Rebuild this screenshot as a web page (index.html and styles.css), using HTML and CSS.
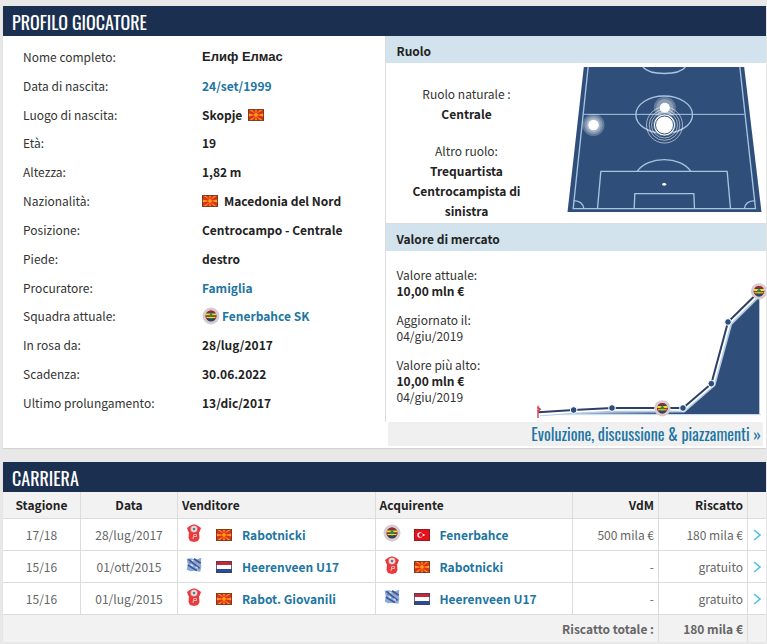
FILE: index.html
```html
<!DOCTYPE html>
<html lang="it">
<head>
  <meta charset="UTF-8">
  <meta name="viewport" content="width=device-width, initial-scale=1">
  <title>Profilo giocatore</title>
  <link rel="stylesheet" href="styles.css">
</head>
<body>

  <!-- Flags and crests -->
  <svg class="sprite" aria-hidden="true">
    <symbol id="flag-mk" viewBox="0 0 16 12">
      <rect width="16" height="12" fill="#e0301a"/>
      <path d="M0 0h3l5 5zM16 0h-3L8 5zM0 12h3l5-5zM16 12h-3L8 7zM7 0h2l-1 5zM7 12h2L8 7zM0 4.500v3L8 6zM16 4.500v3L8 6z" fill="#fba01c"/>
      <circle cx="8" cy="6" r="2.200" fill="#fba01c" stroke="#e0301a" stroke-width=".6"/>
      <rect x=".5" y=".5" width="15" height="11" fill="none" stroke="#5c3a2a" stroke-opacity=".8"/>
    </symbol>
    <symbol id="flag-tr" viewBox="0 0 16 12">
      <rect width="16" height="12" fill="#e8101c"/>
      <circle cx="6" cy="6" r="2.700" fill="#fff"/>
      <circle cx="6.800" cy="6" r="2.100" fill="#e8101c"/>
      <circle cx="9.700" cy="6" r="1" fill="#fff"/>
      <rect x=".5" y=".5" width="15" height="11" fill="none" stroke="#7a2020" stroke-opacity=".8"/>
    </symbol>
    <symbol id="flag-nl" viewBox="0 0 16 12">
      <rect width="16" height="12" fill="#fff"/>
      <rect width="16" height="4" fill="#c4283a"/>
      <rect y="8" width="16" height="4" fill="#2a4c96"/>
      <rect x=".5" y=".5" width="15" height="11" fill="none" stroke="#44405a" stroke-opacity=".8"/>
    </symbol>
    <symbol id="crest-fener" viewBox="0 0 18 18">
      <circle cx="9" cy="9" r="8.500" fill="#dccfd3"/>
      <circle cx="9" cy="9" r="7" fill="none" stroke="#c9bcc4" stroke-width=".8" stroke-dasharray="1 1"/>
      <circle cx="9" cy="9" r="5.500" fill="#34405f"/>
      <path d="M4.500 5.800h9a5.500 5.500 0 0 0-9 0z" fill="#a32630"/>
      <path d="M3.800 6.600h10.400v2H3.600z" fill="#f3dc2b"/>
      <path d="M3.600 8.600h10.800l-.4 2.800H4z" fill="#9a3a2c"/>
      <path d="M9 5.800l2 2.700-1 3.500H8L7 8.500z" fill="#2f8a3c"/>
      <path d="M4.500 10.500h9" stroke="#f3dc2b"/>
    </symbol>
    <symbol id="crest-rabot" viewBox="0 0 16 18">
      <path d="M1 4l3.500-2.500L8 .3l3.500 1.200L15 4l-1.500 4H13l.5 6-1.500 3-4 1-4-1-1.500-3L3 8h-.5z" fill="#ea3a3e"/>
      <circle cx="8" cy="5" r="3.300" fill="#efe6ea" stroke="#c88" stroke-width=".5"/>
      <path d="M8 3.500l1.500 1.100-.6 1.700H7.100l-.6-1.700z" fill="#6d7280"/>
      <path d="M7 15l.8-4.500h2.700v2H8" fill="none" stroke="#f9b8b4"/>
    </symbol>
    <symbol id="crest-heer" viewBox="0 0 16 16">
      <path d="M1.500 2.500L5 2l5 1 4.500-1.500-.5 5 .5 3.500-1 4-5-1-4 .5-3-1.500L2.500 8z" fill="#8aaad8"/>
      <path d="M3 3l10 8M2.500 8l8 5M8 2.500l6 4" stroke="#35589c" stroke-width="1.500"/>
      <path d="M6 3.500l1.500 1M5 7.500l2 1.400M9.500 9.500l2 1.500" stroke="#dfe8f6"/>
      <path d="M10 4.500l1 .8M4 5.500l1 .8M11 9l1 .8" stroke="#c8405c"/>
    </symbol>
  </svg>

  <section class="box">
    <h2 class="box-title">Profilo giocatore</h2>
    <div class="profile">

      <dl class="facts">
        <div><dt>Nome completo:</dt><dd class="cyrillic">Елиф Елмас</dd></div>
        <div><dt>Data di nascita:</dt><dd><a href="#">24/set/1999</a></dd></div>
        <div><dt>Luogo di nascita:</dt><dd class="country">Skopje <svg class="flag"><use href="#flag-mk"/></svg></dd></div>
        <div><dt>Età:</dt><dd>19</dd></div>
        <div><dt>Altezza:</dt><dd>1,82 m</dd></div>
        <div><dt>Nazionalità:</dt><dd class="country"><svg class="flag"><use href="#flag-mk"/></svg> Macedonia del Nord</dd></div>
        <div><dt>Posizione:</dt><dd>Centrocampo - Centrale</dd></div>
        <div><dt>Piede:</dt><dd>destro</dd></div>
        <div><dt>Procuratore:</dt><dd><a href="#">Famiglia</a></dd></div>
        <div><dt>Squadra attuale:</dt><dd class="team"><svg class="crest"><use href="#crest-fener"/></svg><a href="#">Fenerbahce SK</a></dd></div>
        <div><dt>In rosa da:</dt><dd>28/lug/2017</dd></div>
        <div><dt>Scadenza:</dt><dd>30.06.2022</dd></div>
        <div><dt>Ultimo prolungamento:</dt><dd>13/dic/2017</dd></div>
      </dl>

      <div class="side">
        <div class="side-main">
          <h3 class="side-title">Ruolo</h3>
          <div class="role">
            <div class="role-text">
              <p>Ruolo naturale :<br><strong>Centrale</strong></p>
              <p>Altro ruolo:<br><strong>Trequartista</strong><br><strong>Centrocampista di sinistra</strong></p>
            </div>
            <svg class="pitch" viewBox="18 33 590 441" role="img" aria-label="Posizioni in campo">
              <path d="M71 36H552L604 471H22z" fill="#2f4f7a"/>
              <g fill="none" stroke="#a9c4e2" stroke-width="4">
                <path d="M84 36L39 461H586L539 36"/>
                <path d="M70 178H553" stroke-width="3"/>
                <path d="M248 36C270 62 355 62 376 36"/>
                <ellipse cx="312" cy="179" rx="85" ry="56"/>
                <path d="M112 461L122 349H501L511 461M222 461L224 416H401L403 461"/>
                <path d="M231 349C262 302 362 302 392 349"/>
                <path d="M40 437Q68 438 71 461M585 437Q555 438 553 461"/>
              </g>
              <ellipse cx="312" cy="388" rx="6" ry="4" fill="#fff"/>
              <g fill="#fff">
                <g fill-opacity=".25">
                  <circle cx="100" cy="210" r="33"/><circle cx="100" cy="210" r="27"/><circle cx="100" cy="210" r="21"/>
                  <circle cx="314" cy="158" r="33"/><circle cx="314" cy="158" r="26"/>
                </g>
                <g fill="none" stroke="#fff" stroke-opacity=".55" stroke-width="3">
                  <circle cx="313" cy="210" r="54"/><circle cx="313" cy="210" r="46"/><circle cx="313" cy="210" r="39"/>
                </g>
                <circle cx="313" cy="210" r="33" stroke="#2f4f7a" stroke-width="2"/>
                <circle cx="313" cy="210" r="27" stroke="#2f4f7a" stroke-width="3"/>
                <circle cx="100" cy="210" r="16"/>
                <circle cx="314" cy="158" r="15"/>
              </g>
            </svg>
          </div>

          <h3 class="side-title">Valore di mercato</h3>
          <div class="market">
            <div class="market-text">
              <p>Valore attuale:<br><strong>10,00 mln €</strong></p>
              <p>Aggiornato il:<br>04/giu/2019</p>
              <p>Valore più alto:<br><strong>10,00 mln €</strong><br>04/giu/2019</p>
            </div>
            <svg class="chart" viewBox="15 36 693 408" role="img" aria-label="Andamento del valore di mercato">
              <defs>
                <linearGradient id="fade" gradientUnits="userSpaceOnUse" x1="25" y1="0" x2="440" y2="0">
                  <stop offset="0" stop-color="#dce9f5"/>
                  <stop offset="1" stop-color="#2f4f7a"/>
                </linearGradient>
              </defs>
              <path d="M25 433V428L131 420 246 414H459L544 341 594 156 688 64V433z" fill="url(#fade)"/>
              <path d="M28 434H693" stroke="#c7dcf0" stroke-width="3"/>
              <path d="M30 434L131 427 246 423H462L552 345 602 162 688 76" fill="none" stroke="#b4cbe6" stroke-width="9"/>
              <path d="M25 428L131 420 246 414H459L544 341 594 156 688 64" fill="none" stroke="#fff" stroke-width="17"/>
              <path d="M25 427L131 420 246 414H459L544 341 594 156 688 64" fill="none" stroke="#2c4068" stroke-width="6"/>
              <g fill="#2c4e7c" stroke="#fff" stroke-width="3">
                <circle cx="131" cy="420" r="10"/>
                <circle cx="246" cy="414" r="10"/>
                <circle cx="459" cy="414" r="10"/>
                <circle cx="544" cy="341" r="10"/>
                <circle cx="594" cy="156" r="10"/>
              </g>
              <path d="M24 407V450M24 412L31 418 24 424" fill="none" stroke="#d9364a" stroke-width="4"/>
              <use href="#crest-fener" x="371" y="389" width="52" height="52"/>
              <use href="#crest-fener" x="661" y="38" width="52" height="52"/>
            </svg>
          </div>
        </div>
        <a class="more" href="#">Evoluzione, discussione &amp; piazzamenti »</a>
      </div>
    </div>
  </section>

  <section class="box">
    <h2 class="box-title">Carriera</h2>
    <table class="career">
      <colgroup>
        <col class="c-season"><col class="c-date"><col><col><col class="c-value"><col class="c-fee"><col class="c-more">
      </colgroup>
      <thead>
        <tr>
          <th class="center">Stagione</th>
          <th class="center">Data</th>
          <th>Venditore</th>
          <th>Acquirente</th>
          <th class="right">VdM</th>
          <th class="right">Riscatto</th>
          <th></th>
        </tr>
      </thead>
      <tbody>
        <tr>
          <td class="center">17/18</td>
          <td class="center">28/lug/2017</td>
          <td><div class="club"><svg class="crest"><use href="#crest-rabot"/></svg><svg class="flag"><use href="#flag-mk"/></svg><a href="#">Rabotnicki</a></div></td>
          <td><div class="club"><svg class="crest"><use href="#crest-fener"/></svg><svg class="flag"><use href="#flag-tr"/></svg><a href="#">Fenerbahce</a></div></td>
          <td class="right">500 mila €</td>
          <td class="right">180 mila €</td>
          <td class="go"><a href="#" aria-label="Dettagli"><svg viewBox="0 0 8 12"><path d="M1 1l6 5-6 5"/></svg></a></td>
        </tr>
        <tr>
          <td class="center">15/16</td>
          <td class="center">01/ott/2015</td>
          <td><div class="club"><svg class="crest"><use href="#crest-heer"/></svg><svg class="flag"><use href="#flag-nl"/></svg><a href="#">Heerenveen U17</a></div></td>
          <td><div class="club"><svg class="crest"><use href="#crest-rabot"/></svg><svg class="flag"><use href="#flag-mk"/></svg><a href="#">Rabotnicki</a></div></td>
          <td class="right">-</td>
          <td class="right">gratuito</td>
          <td class="go"><a href="#" aria-label="Dettagli"><svg viewBox="0 0 8 12"><path d="M1 1l6 5-6 5"/></svg></a></td>
        </tr>
        <tr>
          <td class="center">15/16</td>
          <td class="center">01/lug/2015</td>
          <td><div class="club"><svg class="crest"><use href="#crest-rabot"/></svg><svg class="flag"><use href="#flag-mk"/></svg><a href="#">Rabot. Giovanili</a></div></td>
          <td><div class="club"><svg class="crest"><use href="#crest-heer"/></svg><svg class="flag"><use href="#flag-nl"/></svg><a href="#">Heerenveen U17</a></div></td>
          <td class="right">-</td>
          <td class="right">gratuito</td>
          <td class="go"><a href="#" aria-label="Dettagli"><svg viewBox="0 0 8 12"><path d="M1 1l6 5-6 5"/></svg></a></td>
        </tr>
      </tbody>
      <tfoot>
        <tr>
          <td class="right" colspan="5">Riscatto totale :</td>
          <td class="right">180 mila €</td>
          <td></td>
        </tr>
      </tfoot>
    </table>
  </section>

</body>
</html>
```

FILE: styles.css
```css
* {
  box-sizing: border-box;
}

body {
  margin: 0;
  padding: 6px 1px 0 3px;
  background: #e8e8e8;
  color: #333;
  font-family: "Source Sans Pro", "Noto Sans CJK SC", sans-serif;
  font-size: 12px;
  line-height: 20px;
}

h2, h3, p, dl, dd {
  margin: 0;
}

a {
  color: #1d75a3;
  text-decoration: none;
}

a:hover {
  text-decoration: underline;
}

.sprite {
  position: absolute;
  width: 0;
  height: 0;
}

.flag {
  width: 16px;
  height: 12px;
}

.crest {
  width: 18px;
  height: 18px;
}

.box {
  background: #fff;
  box-shadow: 0 1px 1px #d4d4d4;
}

.box + .box {
  margin-top: 14px;
}

.box-title {
  padding: 2px 9px 0;
  background: #1b3051;
  color: #fff;
  font-family: Oswald, "Roboto Condensed", "Liberation Sans Narrow", sans-serif;
  font-size: 18px;
  font-weight: 400;
  line-height: 28px;
  text-transform: uppercase;
}

/* Player profile */
.profile {
  display: grid;
  grid-template-columns: 1fr 1fr;
}

.facts {
  display: flex;
  flex-direction: column;
  justify-content: space-between;
  padding: 11px 0 35px 20px;
}

.facts div {
  display: flex;
}

.facts dt {
  width: 50%;
  max-width: 179px;
}

.facts dd {
  color: #222;
  font-weight: 700;
}

.facts .cyrillic {
  font-family: "Liberation Sans", Arial, sans-serif;
  font-size: 13px;
}

.country {
  display: flex;
  align-items: center;
  gap: 6px;
}

.team {
  display: flex;
  align-items: center;
  gap: 2px;
}

.side {
  padding-bottom: 2px;
}

.side-main {
  border-left: 1px solid #dcdcdc;
}

.side-title {
  padding: 2px 11px 0;
  background: #d3e3ee;
  color: #222;
  font-size: 12px;
  line-height: 25px;
}

.role {
  display: flex;
  justify-content: space-between;
  padding: 3px 3px 2px 0;
  border-bottom: 1px solid #dcdcdc;
}

.role-text {
  width: 162px;
  padding: 18px 20px 0;
  text-align: center;
}

.role-text p + p {
  margin-top: 17px;
}

.role-text strong,
.market-text strong {
  color: #222;
}

.pitch {
  width: 197px;
  height: 147px;
}

.market {
  display: flex;
  justify-content: space-between;
  align-items: flex-end;
  padding-bottom: 4px;
}

.market-text {
  padding: 16px 0 13px 11px;
  line-height: 16px;
}

.market-text p + p {
  margin-top: 13px;
}

.chart {
  width: 231px;
  height: 136px;
}

.more {
  display: block;
  margin: 0 3px;
  padding-right: 2px;
  background: #f0f0f0;
  font-family: Oswald, "Roboto Condensed", "Liberation Sans Narrow", sans-serif;
  font-size: 16px;
  line-height: 24px;
  text-align: right;
}

/* Career table */
.career {
  width: 100%;
  border-collapse: separate;
  border-spacing: 0;
  table-layout: fixed;
}

.c-season { width: 78px; }
.c-date { width: 97px; }
.c-value { width: 86px; }
.c-fee { width: 89px; }
.c-more { width: 18px; }

.career th,
.career td {
  height: 32px;
  padding: 0 4px;
  border-right: 1px solid #dcdcdc;
  border-bottom: 1px solid #dcdcdc;
  color: #666;
  text-align: left;
}

.career th {
  height: 27px;
  background: #f2f2f2;
  color: #222;
}

.career th:last-child,
.career td:last-child {
  border-right: 0;
}

.career .center {
  text-align: center;
}

.career .right {
  text-align: right;
}

.career tfoot td {
  height: 27px;
  border-bottom: 0;
  background: #f2f2f2;
  font-weight: 700;
}

.club {
  display: flex;
  align-items: center;
  padding-left: 3px;
  font-weight: 700;
}

.club .crest {
  margin: 0 13px 3px 0;
}

.club .flag {
  margin-right: 10px;
}

.career .go {
  padding: 0 5px;
}

.go svg {
  display: block;
  width: 8px;
  height: 12px;
  fill: none;
  stroke: #4cc0e8;
  stroke-width: 1.5;
}
```
